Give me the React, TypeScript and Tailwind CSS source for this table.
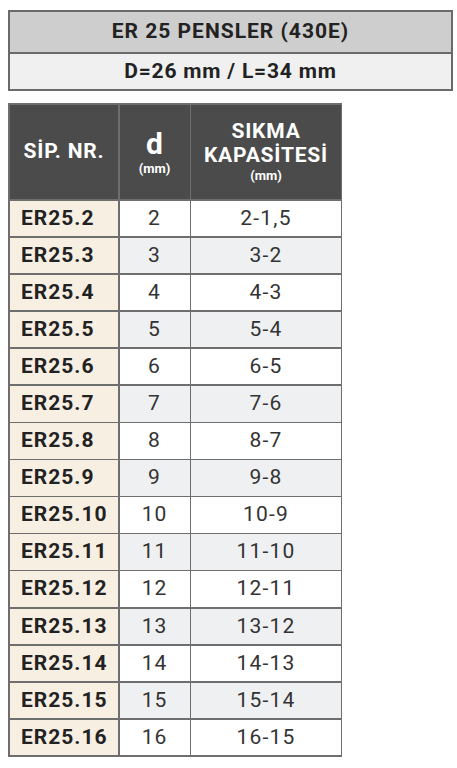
import React from "react";

const rows: [string, string, string][] = [
  ["ER25.2", "2", "2-1,5"],
  ["ER25.3", "3", "3-2"],
  ["ER25.4", "4", "4-3"],
  ["ER25.5", "5", "5-4"],
  ["ER25.6", "6", "6-5"],
  ["ER25.7", "7", "7-6"],
  ["ER25.8", "8", "8-7"],
  ["ER25.9", "9", "9-8"],
  ["ER25.10", "10", "10-9"],
  ["ER25.11", "11", "11-10"],
  ["ER25.12", "12", "12-11"],
  ["ER25.13", "13", "13-12"],
  ["ER25.14", "14", "14-13"],
  ["ER25.15", "15", "15-14"],
  ["ER25.16", "16", "16-15"],
];

export default function App() {
  return (
    <div
      className="w-[457px] h-[768px] bg-white relative"
      style={{ fontFamily: "Roboto, 'Liberation Sans', sans-serif" }}
    >
      <div className="pt-[10px] pl-[8px]">
        <div className="w-[445px] border-2 border-[#6a6a6a] flex flex-col">
          <div className="h-[42px] bg-[#cecece] border-b-2 border-[#6a6a6a] flex items-center justify-center text-[21px] font-bold text-[#222] tracking-[1px]">
            ER 25 PENSLER (430E)
          </div>
          <div className="h-[35px] bg-[#f0f0f1] flex items-center justify-center text-[21px] font-bold text-[#222] tracking-[0.8px]">
            D=26 mm / L=34 mm
          </div>
        </div>
      </div>

      <div className="pt-[12px] pl-[8px]">
        <div className="w-[334px] bg-[#6e6e6e] p-[2px] grid grid-cols-[108px_70px_150px] gap-[1.5px]">
          <div className="h-[94px] bg-[#4b4b4b] flex items-center justify-center text-white font-bold text-[21px] tracking-[0.8px]">
            SİP. NR.
          </div>
          <div className="h-[94px] bg-[#4b4b4b] flex flex-col items-center justify-center text-white font-bold leading-none">
            <span className="text-[30px]">d</span>
            <span className="text-[13px] mt-[3px]">(mm)</span>
          </div>
          <div className="h-[94px] bg-[#4b4b4b] flex flex-col items-center justify-center text-white font-bold">
            <span className="text-[21px] leading-[24px] tracking-[0.8px]">SIKMA</span>
            <span className="text-[21px] leading-[24px] tracking-[0.8px]">KAPASİTESİ</span>
            <span className="text-[13px] leading-[18px]">(mm)</span>
          </div>
          {rows.map((r, i) => {
            const alt = i % 2 === 1;
            return (
              <React.Fragment key={r[0]}>
                <div className="h-[35.6px] bg-[#f8efe3] flex items-center pl-[11px] text-[21px] font-bold text-[#222] tracking-[1px]">
                  {r[0]}
                </div>
                <div
                  className={`h-[35.6px] flex items-center justify-center text-[21px] text-[#333] tracking-[1px] ${alt ? "bg-[#eef0f2]" : "bg-white"}`}
                >
                  {r[1]}
                </div>
                <div
                  className={`h-[35.6px] flex items-center justify-center text-[21px] text-[#333] tracking-[1.2px] ${alt ? "bg-[#eef0f2]" : "bg-white"}`}
                >
                  {r[2]}
                </div>
              </React.Fragment>
            );
          })}
        </div>
      </div>
    </div>
  );
}
